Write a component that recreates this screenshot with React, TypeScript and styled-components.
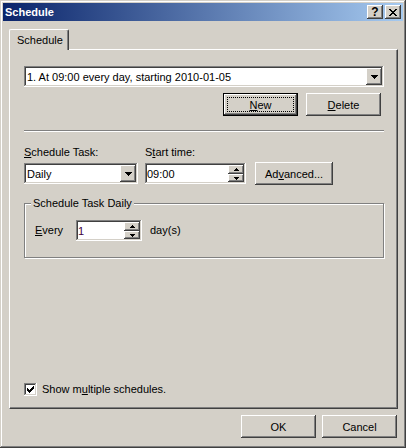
import React from 'react';
import styled, { createGlobalStyle, css } from 'styled-components';

const GlobalStyle = createGlobalStyle`
  html, body { margin: 0; padding: 0; background: #d4d0c8; }
  body {
    font-family: "Liberation Sans", Arial, sans-serif;
    font-size: 11px;
    color: #000;
  }
  * { box-sizing: border-box; }
`;

const raised = css`
  background: #d4d0c8;
  box-shadow: inset -1px -1px #404040, inset 1px 1px #ffffff, inset -2px -2px #808080,
    inset 2px 2px #d4d0c8;
`;

const sunken = css`
  background: #ffffff;
  box-shadow: inset -1px -1px #ffffff, inset 1px 1px #808080, inset -2px -2px #d4d0c8,
    inset 2px 2px #404040;
`;

const Window = styled.div`
  width: 406px;
  height: 448px;
  padding: 3px;
  display: flex;
  flex-direction: column;
  background: #d4d0c8;
  box-shadow: inset -1px -1px #404040, inset 1px 1px #d4d0c8, inset -2px -2px #808080,
    inset 2px 2px #ffffff;
`;

const TitleBar = styled.div`
  height: 18px;
  display: flex;
  align-items: center;
  padding: 0 2px;
  background: linear-gradient(to right, #0a246a, #a6caf0);
`;

const Caption = styled.span`
  flex: 1;
  color: #fff;
  font-weight: bold;
  line-height: 18px;
`;

const CaptionButton = styled.span`
  width: 16px;
  height: 14px;
  display: flex;
  align-items: center;
  justify-content: center;
  font-weight: bold;
  font-size: 12px;
  ${raised}
  & + & {
    margin-left: 2px;
  }
`;

const Body = styled.div`
  padding: 8px 0 0 6px;
`;

const TabStrip = styled.div`
  display: flex;
  height: 20px;
  position: relative;
  z-index: 1;
`;

const Tab = styled.div`
  width: 60px;
  height: 21px;
  padding: 0 0 1px 7px;
  display: flex;
  align-items: center;
  background: #d4d0c8;
  border-left: 1px solid #fff;
  border-top: 1px solid #fff;
  border-right: 1px solid #404040;
  border-radius: 2px 2px 0 0;
  box-shadow: inset -1px 0 #808080;
`;

const Panel = styled.div`
  width: 389px;
  height: 360px;
  display: flex;
  flex-direction: column;
  padding: 16px 0 12px 14px;
  border-top: 1px solid #fff;
  border-left: 1px solid #fff;
  border-right: 1px solid #404040;
  border-bottom: 1px solid #404040;
  box-shadow: inset -1px -1px #808080;
`;

const Combo = styled.div<{ $w: number }>`
  width: ${(p) => p.$w}px;
  height: 21px;
  display: flex;
  align-items: center;
  padding: 2px 2px 2px 3px;
  ${sunken}
`;

const FieldText = styled.span<{ $color?: string }>`
  flex: 1;
  white-space: nowrap;
  color: ${(p) => p.$color ?? '#000'};
`;

const DropButton = styled.span`
  width: 16px;
  height: 17px;
  display: flex;
  align-items: center;
  justify-content: center;
  ${raised}
`;

const TextBox = styled.div<{ $w: number }>`
  width: ${(p) => p.$w}px;
  height: 21px;
  display: flex;
  align-items: center;
  padding: 2px 2px 2px 2px;
  ${sunken}
`;

const Spin = styled.span`
  width: 16px;
  height: 17px;
  display: flex;
  flex-direction: column;
`;

const SpinButton = styled.span<{ $h: number }>`
  height: ${(p) => p.$h}px;
  display: flex;
  align-items: center;
  justify-content: center;
  ${raised}
`;

const ButtonRow = styled.div`
  display: flex;
  justify-content: flex-end;
  gap: 8px;
  width: 360px;
  padding-right: 3px;
  margin-top: 6px;
`;

const Button = styled.span<{ $w?: number; $default?: boolean }>`
  width: ${(p) => p.$w ?? 75}px;
  height: 23px;
  display: flex;
  align-items: center;
  justify-content: center;
  position: relative;
  white-space: nowrap;
  ${raised}
  ${(p) =>
    p.$default &&
    css`
      box-shadow: inset 0 0 0 1px #000, inset -2px -2px #404040, inset 2px 2px #ffffff,
        inset -3px -3px #808080, inset 3px 3px #d4d0c8;
      &::after {
        content: '';
        position: absolute;
        inset: 4px;
        border: 1px dotted #000;
      }
    `}
`;

const Separator = styled.div`
  width: 360px;
  height: 2px;
  margin-top: 14px;
  border-top: 1px solid #808080;
  border-bottom: 1px solid #fff;
`;

const FieldRow = styled.div`
  display: flex;
  align-items: flex-end;
  margin-top: 14px;
`;

const Field = styled.div<{ $mr: number }>`
  display: flex;
  flex-direction: column;
  gap: 4px;
  margin-right: ${(p) => p.$mr}px;
`;

const Label = styled.span`
  line-height: 13px;
  white-space: nowrap;
`;

const U = styled.span`
  text-decoration: underline;
`;

const Group = styled.fieldset`
  width: 360px;
  min-width: 0;
  margin: 13px 0 0 0;
  padding: 0 0 16px 10px;
  border: 1px solid #808080;
  box-shadow: inset 1px 1px #fff, 1px 1px #fff;
`;

const GroupLegend = styled.legend`
  padding: 0 2px;
  margin-left: -4px;
  line-height: 13px;
  background: #d4d0c8;
`;

const EveryRow = styled.div`
  display: flex;
  align-items: center;
  margin-top: 10px;
`;

const EveryLabel = styled.span`
  width: 41px;
  line-height: 13px;
`;

const Unit = styled.span`
  margin-left: 8px;
  line-height: 13px;
`;

const CheckRow = styled.div`
  display: flex;
  align-items: center;
  gap: 5px;
  margin-top: auto;
`;

const CheckBox = styled.span`
  width: 13px;
  height: 13px;
  display: flex;
  padding: 3px;
  ${sunken}
`;

const Footer = styled.div`
  display: flex;
  justify-content: flex-end;
  gap: 6px;
  margin-top: 6px;
  padding-right: 6px;
`;

const DownArrow = () => (
  <svg width="7" height="4" viewBox="0 0 7 4" shapeRendering="crispEdges">
    <path d="M0 0h7v1H0zM1 1h5v1H1zM2 2h3v1H2zM3 3h1v1H3z" fill="#000" />
  </svg>
);

const SmallArrow = ({ up }: { up?: boolean }) => (
  <svg width="5" height="3" viewBox="0 0 5 3" shapeRendering="crispEdges">
    <path
      d={up ? 'M2 0h1v1H2zM1 1h3v1H1zM0 2h5v1H0z' : 'M0 0h5v1H0zM1 1h3v1H1zM2 2h1v1H2z'}
      fill="#000"
    />
  </svg>
);

const CloseGlyph = () => (
  <svg width="8" height="7" viewBox="0 0 8 7" shapeRendering="crispEdges">
    <path
      d="M0 0h2v1H0zM6 0h2v1H6zM1 1h2v1H1zM5 1h2v1H5zM2 2h4v1H2zM3 3h2v1H3zM2 4h4v1H2zM1 5h2v1H1zM5 5h2v1H5zM0 6h2v1H0zM6 6h2v1H6z"
      fill="#000"
    />
  </svg>
);

const CheckGlyph = () => (
  <svg width="7" height="7" viewBox="0 0 7 7" shapeRendering="crispEdges">
    <path
      d="M6 0h1v1H6zM5 1h2v1H5zM0 2h1v1H0zM4 2h3v1H4zM0 3h2v1H0zM3 3h3v1H3zM0 4h5v1H0zM1 5h3v1H1zM2 6h1v1H2z"
      fill="#000"
    />
  </svg>
);

const Spinner = () => (
  <Spin>
    <SpinButton $h={9}>
      <SmallArrow up />
    </SpinButton>
    <SpinButton $h={8}>
      <SmallArrow />
    </SpinButton>
  </Spin>
);

export default function App() {
  return (
    <>
      <GlobalStyle />
      <Window>
        <TitleBar>
          <Caption>Schedule</Caption>
          <CaptionButton>?</CaptionButton>
          <CaptionButton>
            <CloseGlyph />
          </CaptionButton>
        </TitleBar>
        <Body>
          <TabStrip>
            <Tab>Schedule</Tab>
          </TabStrip>
          <Panel>
            <Combo $w={360}>
              <FieldText>1. At 09:00 every day, starting 2010-01-05</FieldText>
              <DropButton>
                <DownArrow />
              </DropButton>
            </Combo>
            <ButtonRow>
              <Button $default>
                <U>N</U>ew
              </Button>
              <Button>
                <U>D</U>elete
              </Button>
            </ButtonRow>
            <Separator />
            <FieldRow>
              <Field $mr={7}>
                <Label>
                  <U>S</U>chedule Task:
                </Label>
                <Combo $w={114}>
                  <FieldText>Daily</FieldText>
                  <DropButton>
                    <DownArrow />
                  </DropButton>
                </Combo>
              </Field>
              <Field $mr={9}>
                <Label>
                  S<U>t</U>art time:
                </Label>
                <TextBox $w={101}>
                  <FieldText>09:00</FieldText>
                  <Spinner />
                </TextBox>
              </Field>
              <Button $w={78} style={{ marginBottom: -1 }}>
                Ad<U>v</U>anced...
              </Button>
            </FieldRow>
            <Group>
              <GroupLegend>Schedule Task Daily</GroupLegend>
              <EveryRow>
                <EveryLabel>
                  <U>E</U>very
                </EveryLabel>
                <TextBox $w={66}>
                  <FieldText $color="#400040">1</FieldText>
                  <Spinner />
                </TextBox>
                <Unit>day(s)</Unit>
              </EveryRow>
            </Group>
            <CheckRow>
              <CheckBox>
                <CheckGlyph />
              </CheckBox>
              <Label>
                Show m<U>u</U>ltiple schedules.
              </Label>
            </CheckRow>
          </Panel>
          <Footer>
            <Button>OK</Button>
            <Button>Cancel</Button>
          </Footer>
        </Body>
      </Window>
    </>
  );
}
